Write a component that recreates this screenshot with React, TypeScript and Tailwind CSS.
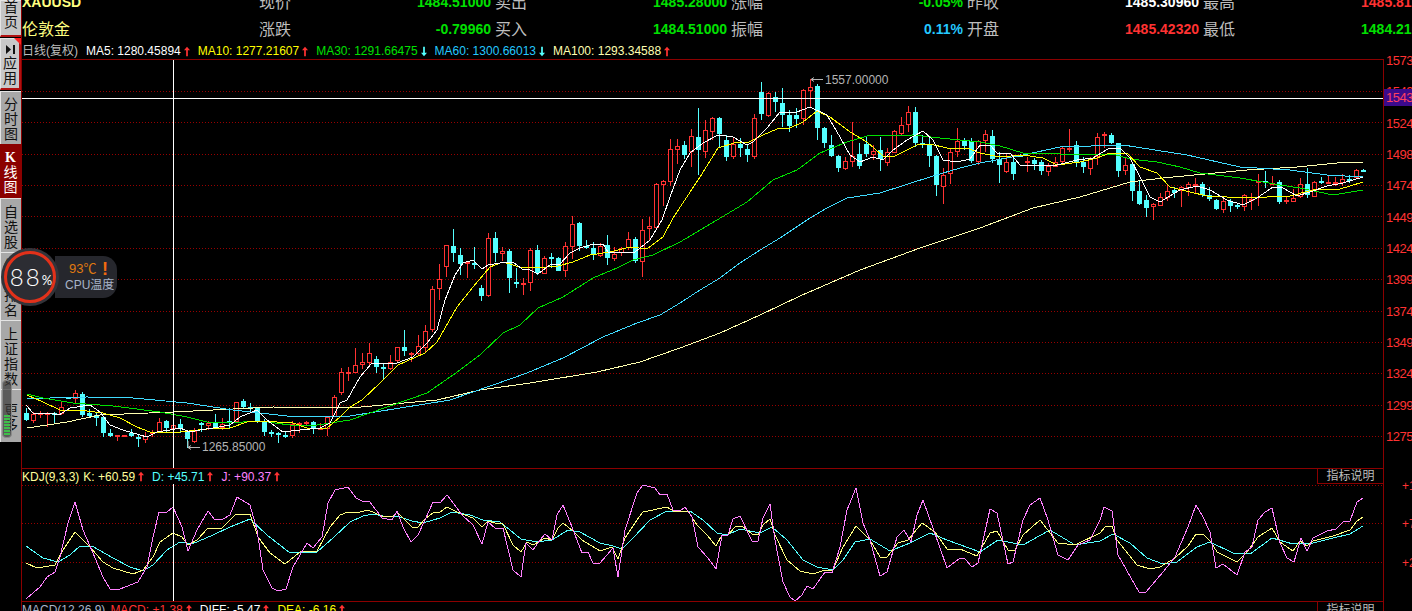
const UP = "#ff3232";
const DOWN = "#54ffff";

// top, bottom, high, low, 1 = falling (filled cyan)
const candles: number[][] = [
  [413,420,408,421,1],[414,420,412,423,0],[413,414,411,418,0],[413,414,412,427,0],[413,414,412,424,1],[407,413,401,415,0],[397,399,397,399,1],[393,398,390,403,0],
  [394,415,392,417,1],[413,416,409,417,1],[415,418,413,426,1],[417,433,417,437,1],[433,436,429,437,1],[435,435,435,441,0],[435,435,435,436,0],[433,436,429,437,1],
  [437,439,435,447,1],[436,439,432,443,0],[432,432,430,437,0],[422,431,418,433,0],[421,428,420,432,1],[425,428,422,432,0],[424,429,419,433,1],[432,439,430,448,1],
  [431,441,428,443,0],[423,425,422,432,1],[423,425,421,430,0],[423,427,414,428,1],[424,427,418,430,0],[421,422,408,428,1],[402,421,402,422,0],[401,407,399,408,1],
  [407,407,403,413,1],[407,421,407,423,1],[421,432,419,436,1],[432,433,430,437,1],[433,434,432,443,1],[435,435,432,438,1],[424,435,421,438,0],[423,423,422,433,0],
  [422,422,421,425,0],[422,428,421,434,1],[428,428,423,430,0],[417,428,416,436,0],[397,416,395,417,0],[372,392,368,395,0],[372,373,367,381,0],[365,372,348,372,0],
  [362,364,353,369,0],[353,362,343,367,0],[359,367,356,373,1],[367,368,364,379,1],[362,368,355,370,0],[347,360,347,363,0],[347,351,330,356,1],[353,354,352,362,0],
  [346,353,335,355,0],[331,347,325,352,0],[289,329,286,332,0],[279,288,264,300,0],[245,266,245,277,0],[246,253,229,262,1],[255,264,248,275,1],[262,263,262,278,0],
  [263,265,247,269,1],[288,296,285,301,1],[238,295,233,297,0],[238,253,232,262,1],[251,253,247,261,0],[251,278,249,293,1],[282,284,268,288,1],[283,284,278,295,0],
  [250,282,248,291,0],[250,273,245,275,1],[258,273,256,273,0],[257,258,253,268,1],[258,271,257,271,1],[246,270,242,277,0],[224,246,216,259,0],[223,246,222,251,1],
  [246,247,240,249,1],[248,255,242,260,1],[246,255,243,257,0],[245,258,235,265,1],[254,258,247,261,0],[248,252,247,256,0],[239,247,232,250,0],[239,261,237,263,1],
  [230,261,219,277,0],[226,228,217,240,0],[184,227,183,228,0],[181,184,180,206,0],[149,181,139,186,0],[146,149,139,164,0],[145,155,141,159,1],[136,151,129,167,0],
  [137,150,108,175,1],[130,151,120,158,0],[118,131,117,140,0],[118,134,117,147,1],[140,157,135,161,1],[144,156,138,159,0],[144,148,138,157,1],[149,155,145,162,1],
  [118,156,114,159,0],[92,114,82,120,1],[93,115,92,117,0],[97,102,92,112,1],[103,115,88,127,1],[115,126,110,132,1],[115,119,108,128,1],[90,118,89,125,0],
  [87,90,79,108,0],[86,128,84,140,1],[128,143,127,148,1],[145,156,135,157,1],[156,168,155,172,1],[161,168,157,170,0],[156,161,122,167,0],[154,166,143,169,1],
  [144,154,137,157,1],[151,154,145,160,0],[150,159,137,171,1],[152,162,148,166,0],[131,152,130,153,0],[125,133,117,135,0],[112,124,106,132,0],[112,143,107,147,1],
  [143,144,135,148,1],[144,156,137,167,1],[156,185,155,196,1],[175,186,168,204,0],[152,173,148,184,0],[141,151,128,157,0],[141,146,138,150,1],[141,161,138,163,1],
  [141,161,140,165,0],[134,140,130,152,0],[136,159,130,163,1],[159,165,152,183,1],[162,171,153,173,0],[162,174,155,180,1],[155,156,154,157,1],[161,162,157,172,0],
  [160,164,158,170,1],[162,171,160,175,1],[166,171,163,176,0],[162,166,157,167,0],[148,161,147,165,0],[148,149,129,152,0],[145,162,141,167,1],[162,167,157,173,1],
  [159,168,157,175,0],[137,156,133,165,0],[134,135,132,148,0],[135,143,133,144,1],[143,171,143,177,1],[165,170,158,175,0],[164,191,163,201,1],[191,204,180,205,1],
  [200,208,195,217,1],[204,206,203,220,0],[197,205,193,205,0],[191,197,184,201,0],[190,193,187,198,1],[187,190,186,207,0],[184,187,182,196,0],[184,185,178,194,0],
  [184,195,182,197,1],[195,199,187,201,1],[200,209,199,210,1],[201,209,198,213,0],[201,206,199,212,1],[205,206,204,209,1],[195,206,194,211,0],[199,200,193,210,0],
  [181,182,174,206,0],[181,182,171,188,1],[183,184,176,185,0],[182,202,180,204,1],[200,201,196,204,0],[198,201,189,202,0],[184,196,178,198,0],[184,195,168,198,1],
  [182,196,181,197,0],[181,182,177,184,1],[182,183,176,184,0],[182,183,177,186,0],[179,182,174,186,0],[179,180,175,183,1],[170,177,169,179,0],[170,171,169,171,1],
];

const ma5 = "26,405 33,413 50,413 59,415 70,408 90,405 100,412 110,425 123,430 140,435 147,437 157,432 170,430 180,428 190,432 200,430 213,428 230,425 240,417 257,410 267,420 283,432 300,430 320,428 330,423 340,403 347,400 360,377 372,363 397,363 413,357 427,343 437,330 445,300 455,275 463,263 473,260 482,269 488,265 500,263 513,262 522,269 530,270 538,274 550,265 560,264 570,253 580,248 590,245 603,244 608,252 623,252 635,252 650,240 662,220 670,197 680,170 690,153 703,143 718,135 733,137 747,145 753,142 767,128 780,112 797,112 810,107 827,115 840,137 850,155 860,162 873,157 883,160 893,150 907,140 923,131 933,140 943,160 957,162 970,159 980,145 990,145 997,153 1010,153 1020,165 1040,165 1057,165 1077,160 1093,158 1108,149 1120,148 1130,158 1140,177 1150,197 1160,202 1180,190 1197,186 1210,190 1227,200 1243,205 1257,198 1273,187 1283,188 1297,196 1310,192 1327,186 1343,183 1363,177";
const ma10 = "27,395 43,402 60,410 87,411 103,413 120,418 137,427 150,432 180,432 207,429 230,428 250,421 277,422 293,423 307,428 327,428 340,417 350,407 362,400 380,383 398,365 425,353 437,342 457,307 473,287 490,267 503,262 523,268 547,267 558,266 573,262 590,255 610,252 630,247 647,249 663,237 673,218 700,177 718,148 737,142 747,143 763,135 777,129 790,128 803,122 817,111 830,117 850,132 867,142 883,156 893,157 917,145 930,144 947,148 967,148 980,153 1000,157 1023,155 1043,158 1057,165 1080,162 1097,158 1110,153 1127,153 1140,167 1157,173 1170,187 1190,192 1207,196 1247,198 1267,197 1290,196 1313,190 1340,189 1350,186 1363,182";
const ma30 = "27,394 43,398 73,403 113,406 160,412 187,417 207,422 227,423 260,421 290,425 317,425 350,420 410,399 427,393 453,375 480,355 503,333 520,325 538,308 563,297 593,278 617,268 633,260 653,255 680,242 717,220 747,202 773,180 797,170 820,153 847,142 867,136 913,135 940,138 980,142 1000,146 1023,153 1060,154 1113,154 1130,159 1157,162 1180,167 1200,173 1240,178 1280,185 1300,188 1333,195 1363,190";
const ma60 = "27,398 50,398 87,397 133,398 187,403 233,410 287,416 350,416 450,400 493,385 527,373 563,358 603,337 637,323 660,315 680,303 700,290 720,278 740,263 760,250 780,238 807,220 827,208 847,198 880,193 905,185 933,176 960,168 980,163 1023,155 1060,147 1123,145 1187,155 1240,167 1290,170 1327,175 1363,177";
const ma100 = "27,428 67,422 100,415 173,412 273,407 350,408 437,400 480,390 530,383 597,372 640,362 680,348 720,333 760,315 800,296 860,270 920,248 980,228 1033,208 1080,197 1130,182 1163,178 1247,170 1297,167 1347,162 1363,162";

const kdjJ = "26,599 40,587 47,577 55,572 60,557 68,523 75,502 83,530 93,553 103,577 110,589 120,589 138,582 147,567 153,537 159,512 167,512 173,507 182,527 188,551 197,530 208,511 215,520 223,519 230,515 237,497 250,505 257,530 263,570 272,588 278,591 286,589 293,567 307,543 313,548 322,537 328,503 335,490 348,487 356,498 362,501 370,502 382,518 392,520 397,511 403,527 411,542 418,535 425,520 433,502 440,503 447,495 457,508 462,515 473,525 482,544 488,522 495,528 503,528 513,570 521,577 526,543 533,550 540,540 545,534 552,540 557,515 563,505 572,527 582,553 588,552 593,563 600,563 613,548 618,577 625,530 637,493 643,485 655,488 660,495 667,494 673,510 680,511 685,507 692,517 698,547 708,558 716,569 722,535 728,535 733,519 740,516 752,541 758,541 763,518 770,504 775,540 783,582 790,597 795,601 802,595 807,586 813,589 825,572 832,573 840,547 847,510 856,488 863,523 870,540 880,576 887,572 897,537 904,530 911,542 917,515 923,500 933,528 947,568 960,558 965,559 972,567 978,563 990,509 997,513 1008,564 1013,562 1023,520 1030,505 1040,498 1048,520 1058,555 1068,560 1078,545 1090,540 1100,520 1104,507 1112,511 1118,555 1139,592 1146,592 1163,572 1175,557 1188,527 1196,505 1203,517 1210,532 1216,568 1223,564 1237,575 1245,552 1252,547 1258,520 1265,512 1272,508 1280,543 1287,558 1294,562 1301,538 1307,551 1313,538 1327,531 1336,529 1343,522 1350,521 1357,502 1363,498";
const kdjK = "26,563 37,568 55,565 63,550 75,532 90,547 103,562 113,568 133,574 143,570 153,557 160,542 173,533 182,537 188,545 197,540 208,528 222,528 235,515 250,514 258,537 270,553 285,564 300,552 317,551 330,527 340,515 348,512 360,512 368,510 382,516 392,517 397,512 412,527 418,527 425,519 433,513 440,512 447,507 457,512 473,518 482,527 488,521 495,523 503,524 513,545 521,552 527,542 533,545 545,538 552,540 558,528 563,523 573,531 582,540 600,551 612,547 618,559 625,538 637,520 643,512 667,507 675,512 688,511 697,525 707,535 716,546 722,535 728,535 735,527 742,526 752,534 758,535 763,525 770,519 775,535 787,560 800,571 813,574 825,570 833,570 843,547 856,526 870,540 880,557 887,557 898,543 908,540 922,523 935,532 947,549 960,549 977,556 990,533 997,531 1008,550 1015,550 1023,535 1040,520 1058,543 1075,545 1100,533 1105,527 1112,526 1117,540 1137,565 1150,569 1160,567 1175,558 1188,546 1196,534 1203,534 1211,542 1217,552 1237,562 1247,552 1258,537 1272,528 1280,542 1293,551 1300,541 1307,546 1313,541 1333,536 1350,530 1357,521 1363,517";
const kdjD = "26,546 43,558 58,562 70,555 80,546 92,546 113,558 130,567 143,571 153,565 167,550 180,542 192,544 213,535 230,527 250,519 267,535 290,553 317,552 333,538 350,522 363,516 373,514 383,516 397,516 412,521 423,523 440,518 452,512 470,515 483,520 500,522 510,530 521,539 537,542 552,540 568,530 580,532 600,543 613,546 622,549 633,538 650,520 667,511 690,511 703,520 717,533 727,535 740,529 760,533 772,527 787,540 803,560 817,567 833,570 843,560 855,542 870,539 890,551 910,543 930,533 947,540 980,552 998,540 1023,545 1050,530 1075,545 1100,541 1113,534 1130,543 1147,558 1163,564 1177,562 1197,547 1210,542 1233,553 1250,554 1272,538 1293,544 1313,543 1333,538 1350,534 1363,526";

const mainGrid = [91, 122, 154, 185, 216, 248, 279, 311, 342, 373, 405, 436];
const kdjGrid = [485, 523, 562];
const prices = ["1573", "1549", "1524", "1498", "1474", "1449", "1424", "1399", "1374", "1349", "1324", "1299", "1275"];

const Arrow = ({ down }: { down?: boolean }) => (
  <svg width="6" height="11" viewBox="0 0 7 11" className="ml-[3px] shrink-0">
    <path
      d={down ? "M2.5 0h2v7h2.5L3.5 11 0 7h2.5z" : "M3.5 0 7 4H4.5v7h-2V4H0z"}
      fill={down ? DOWN : UP}
    />
  </svg>
);

const Tab = ({ lines, className, icon }: { lines: string[]; className: string; icon?: boolean }) => (
  <div className={`relative flex w-[21px] shrink-0 flex-col items-center justify-center border-t border-l border-[#e4e4e4] pt-[3px] text-[14px] leading-[15px] ${className}`}>
    {icon && (
      <svg width="9" height="9" viewBox="0 0 9 9" className="mb-[2px]">
        <path d="M0 0 5 4.5 0 9z M7 0h2v9H7z" fill="#111" />
      </svg>
    )}
    {lines.map((l, i) => (
      <span key={i} className={l === "K" ? "font-['Liberation_Serif'] font-bold" : ""}>
        {l}
      </span>
    ))}
  </div>
);

const Sidebar = () => (
  <div className="flex h-full w-[22px] shrink-0 flex-col border-r border-[#8b0000] bg-black">
    <Tab lines={["首", "页"]} className="h-[37px] border-b-2 border-b-[#b01010] bg-[#c4c4c4] pb-[9px] text-[#111]" />
    <div className="relative mt-px">
      <Tab icon lines={["应", "用"]} className="h-[52px] border-r-2 border-b-2 border-r-[#b01010] border-b-[#b01010] bg-[#c8c8c8] text-[#111]" />
      <div className="absolute top-0 right-0 h-0 w-0 border-t-[7px] border-l-[7px] border-t-[#ff2020] border-l-transparent" />
    </div>
    <Tab lines={["分", "时", "图"]} className="mt-px h-[53px] bg-[#a8a8a8] text-[#111]" />
    <Tab lines={["K", "线", "图"]} className="h-[54px] border-none bg-[#8b0000] text-white" />
    <Tab lines={["自", "选", "股"]} className="h-[54px] bg-[#a8a8a8] text-[#111]" />
    <Tab lines={["综", "合", "排", "名"]} className="h-[68px] bg-[#a8a8a8] text-[#111]" />
    <Tab lines={["上", "证", "指", "数"]} className="h-[69px] bg-[#a8a8a8] text-[#111]" />
    <Tab lines={["更", "多"]} className="h-[53px] bg-[#a8a8a8] text-[#111]" />
  </div>
);

const QuoteCell = ({ label, value, color }: { label: string; value: string; color: string }) => (
  <div className="flex w-[236px] shrink-0 items-center justify-between pr-[4px]">
    <span className="text-[16px] text-[#bdbdbd]">{label}</span>
    <span className={`text-[14px] font-bold ${color}`}>{value}</span>
  </div>
);

const QuoteRow = ({ name, cells, className }: { name: string; cells: [string, string, string][]; className: string }) => (
  <div className="flex h-[27px] items-center">
    <div className={`w-[237px] shrink-0 text-[#ffff80] ${className}`}>{name}</div>
    {cells.map(([label, value, color]) => (
      <QuoteCell key={label} label={label} value={value} color={color} />
    ))}
  </div>
);

const Legend = ({ text, color, down }: { text: string; color: string; down?: boolean }) => (
  <div className="flex items-center">
    <span className={color}>{text}</span>
    <Arrow down={down} />
  </div>
);

const Grid = ({ rows }: { rows: number[] }) => (
  <>
    {rows.map((y) => (
      <line key={y} x1="22" x2="1383" y1={y + 0.5} y2={y + 0.5} stroke="#980000" strokeDasharray="1 2" />
    ))}
  </>
);

const Candles = () => (
  <g shapeRendering="crispEdges">
    {candles.map(([top, bottom, high, low, down], k) => {
      const x = 26.5 + 7 * k;
      const color = down ? DOWN : UP;
      return (
        <g key={k}>
          <line x1={x} x2={x} y1={high} y2={low} stroke={color} />
          {down ? (
            <rect x={x - 2.5} y={top} width="5" height={Math.max(bottom - top, 2)} fill={color} />
          ) : (
            <rect x={x - 2} y={top + 0.5} width="4" height={Math.max(bottom - top, 1)} fill="#000" stroke={color} />
          )}
        </g>
      );
    })}
  </g>
);

const MainChart = () => (
  <svg width="1361" height="408" viewBox="22 60 1361 408" className="block">
    <Grid rows={mainGrid} />
    <Candles />
    <g fill="none" shapeRendering="crispEdges">
      <polyline points={ma100} stroke="#ffffb0" />
      <polyline points={ma60} stroke="#40dcff" />
      <polyline points={ma30} stroke="#00e000" />
      <polyline points={ma10} stroke="#ffff00" />
      <polyline points={ma5} stroke="#ffffff" />
    </g>
    <g shapeRendering="crispEdges" stroke="#ffffff">
      <line x1="173.5" x2="173.5" y1="60" y2="468" />
      <line x1="22" x2="1383" y1="98.5" y2="98.5" />
    </g>
    <path d="M811 79.5h12M811 79.5l3-2M811 79.5l3 2" stroke="#b4b4b4" fill="none" />
    <text x="825" y="84" fontSize="12" fill="#b4b4b4">1557.00000</text>
    <path d="M188 441v6.5h12M188 447.5l3-2M188 447.5l3 2" stroke="#b4b4b4" fill="none" />
    <text x="202" y="451" fontSize="12" fill="#b4b4b4">1265.85000</text>
  </svg>
);

const KdjChart = () => (
  <svg width="1361" height="117" viewBox="22 484 1361 117" className="block">
    <Grid rows={kdjGrid} />
    <g fill="none" shapeRendering="crispEdges">
      <polyline points={kdjD} stroke={DOWN} />
      <polyline points={kdjK} stroke="#ffff80" />
      <polyline points={kdjJ} stroke="#ff80ff" />
    </g>
    <line x1="173.5" x2="173.5" y1="484" y2="601" stroke="#ffffff" shapeRendering="crispEdges" />
  </svg>
);

const HelpTag = () => (
  <div className="flex h-[15px] w-[66px] shrink-0 items-center justify-center border-b border-l border-[#8b0000] text-[12px] text-[#bdbdbd]">
    指标说明
  </div>
);

const CpuWidget = () => (
  <div className="absolute top-[248px] left-px z-10 flex items-center">
    <div className="z-10 flex h-[58px] w-[58px] items-center justify-center rounded-full bg-[#33343a]">
      <div className="flex h-[52px] w-[52px] items-center justify-center rounded-full border-[3px] border-[#e2311a] bg-[#2c2d33] pl-[2px] font-['Lato'] text-white">
        <span className="text-[24px] leading-none tracking-[2px] font-light">88</span>
        <span className="mt-[6px] text-[13px] leading-none">%</span>
      </div>
    </div>
    <div className="-ml-[4px] flex h-[42px] w-[62px] flex-col justify-center rounded-r-[14px] bg-[#26272d] pl-[10px]">
      <div className="flex items-center justify-between pr-[9px] pl-[4px] text-[13px] leading-[16px] text-[#e07a10]">
        <span>93℃</span>
        <span className="text-[18px] font-black text-[#f26a10]">!</span>
      </div>
      <span className="text-[12px] leading-[16px] whitespace-nowrap text-[#a8b4c8]">CPU温度</span>
    </div>
  </div>
);

const VolumeGauge = () => (
  <div className="absolute top-[380px] left-[2px] z-10 flex h-[58px] w-[10px] flex-col justify-end gap-px rounded-[4px] border border-[#8a8a8a] bg-[#3a3a3a]/70 px-px pb-[2px]">
    {Array.from({ length: 7 }).map((_, i) => (
      <div key={i} className="h-[2px] bg-[#3fbf4a]" />
    ))}
  </div>
);

export default function App() {
  return (
    <div className="relative flex h-[611px] w-[1412px] overflow-hidden bg-black font-['Liberation_Sans','Noto_Sans_CJK_SC',sans-serif] text-[12px]">
      <Sidebar />
      <VolumeGauge />
      <CpuWidget />

      <div className="flex min-w-0 flex-1 flex-col">
        <div className="-mt-[11px] shrink-0 overflow-hidden">
          <QuoteRow
            name="XAUUSD"
            className="text-[14px] font-bold"
            cells={[
              ["现价", "1484.51000", "text-[#00e000]"],
              ["卖出", "1485.28000", "text-[#00e000]"],
              ["涨幅", "-0.05%", "text-[#00e000]"],
              ["昨收", "1485.30960", "text-white"],
              ["最高", "1485.81000", "text-[#ff3232]"],
            ]}
          />
          <QuoteRow
            name="伦敦金"
            className="text-[16px]"
            cells={[
              ["涨跌", "-0.79960", "text-[#00e000]"],
              ["买入", "1484.51000", "text-[#00e000]"],
              ["振幅", "0.11%", "text-[#24c8ff]"],
              ["开盘", "1485.42320", "text-[#ff3232]"],
              ["最低", "1484.21000", "text-[#00e000]"],
            ]}
          />
        </div>

        <div className="flex h-[16px] shrink-0 items-center gap-2">
          <span className="w-[56px] whitespace-nowrap text-[#bdbdbd]">日线(复权)</span>
          <Legend text="MA5: 1280.45894" color="text-white" />
          <Legend text="MA10: 1277.21607" color="text-[#ffff00]" />
          <Legend text="MA30: 1291.66475" color="text-[#00e000]" down />
          <Legend text="MA60: 1300.66013" color="text-[#24c8ff]" down />
          <Legend text="MA100: 1293.34588" color="text-[#ffffb0]" />
        </div>

        <div className="flex min-h-0 flex-1">
          <div className="flex w-[1361px] shrink-0 flex-col">
            <div className="border-t border-[#8b0000]">
              <MainChart />
            </div>
            <div className="border-t border-[#8b0000]">
              <div className="flex h-[15px] items-center justify-between">
                <div className="flex items-center gap-2">
                  <span className="mr-[-4px] text-[#ffff9a]">KDJ(9,3,3)</span>
                  <Legend text="K: +60.59" color="text-[#ffff9a]" />
                  <Legend text="D: +45.71" color="text-[#54ffff]" />
                  <Legend text="J: +90.37" color="text-[#ff80ff]" />
                </div>
                <HelpTag />
              </div>
              <KdjChart />
            </div>
            <div className="border-t border-[#8b0000]">
              <div className="flex h-[15px] items-center justify-between">
                <div className="flex items-center gap-2">
                  <span className="mr-[-3px] text-[#a8b4c8]">MACD(12,26,9)</span>
                  <Legend text="MACD: +1.38" color="text-[#ff3232]" />
                  <Legend text="DIFF: -5.47" color="text-white" />
                  <Legend text="DEA: -6.16" color="text-[#ffff00]" />
                </div>
                <div className="flex h-[15px] w-[66px] shrink-0 items-center justify-center border-l border-[#8b0000] text-[12px] text-[#bdbdbd]">
                  指标说明
                </div>
              </div>
            </div>
          </div>

          <div className="relative flex w-[29px] shrink-0 flex-col border-l border-[#8b0000] text-[#ff3232]">
            <div className="-mt-[14px] flex flex-col overflow-hidden pl-[2px] text-[13px] tracking-[-0.5px]">
              {prices.map((p) => (
                <div key={p} className="flex h-[31.33px] shrink-0 items-center">
                  {p}
                </div>
              ))}
            </div>
            <div className="absolute top-[30px] left-0 flex h-[17px] w-[28px] items-center bg-[#3c0a8c] pl-[2px] text-[13px] tracking-[-0.5px] text-[#ff4060]">
              1543
            </div>
            <div className="mt-[14px] flex flex-col overflow-hidden pl-[18px] text-[12px] whitespace-nowrap">
              <div className="flex h-[38.5px] shrink-0 items-center">+100</div>
              <div className="flex h-[38.5px] shrink-0 items-center">+75</div>
              <div className="flex h-[38.5px] shrink-0 items-center">+25</div>
            </div>
          </div>
        </div>
      </div>
    </div>
  );
}
